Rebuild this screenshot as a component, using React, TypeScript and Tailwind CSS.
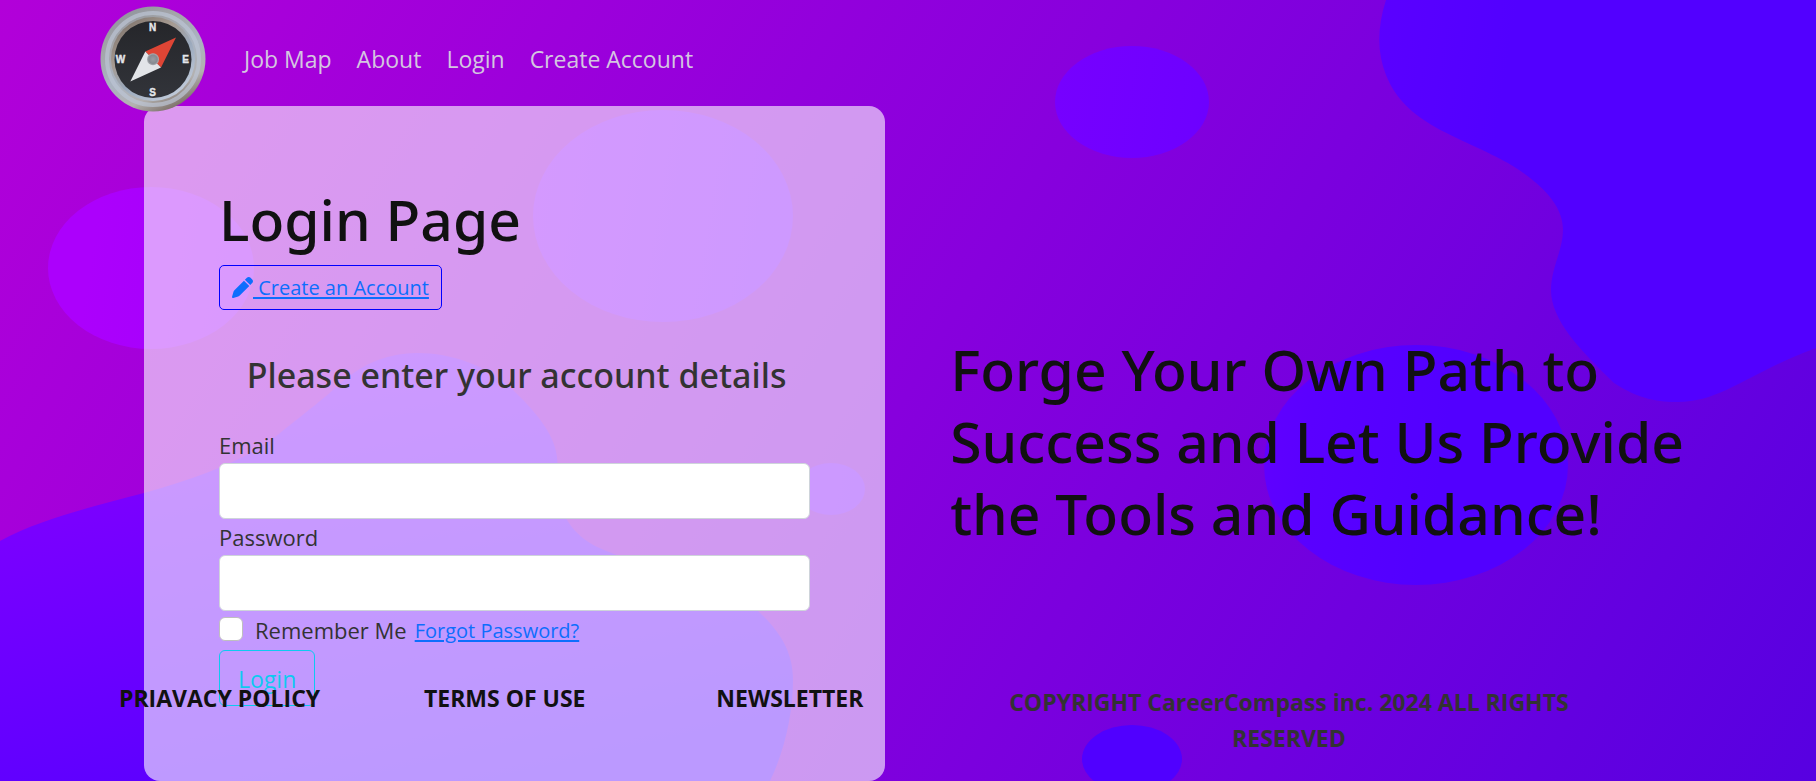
import { FaPen } from "react-icons/fa6";

function Backdrop() {
  return (
    <svg
      className="absolute inset-0 -z-10 h-full w-full"
      viewBox="0 0 1816 781"
      preserveAspectRatio="none"
      aria-hidden="true"
    >
      <defs>
        <linearGradient id="sky" gradientUnits="userSpaceOnUse" x1="0" y1="0" x2="1684" y2="1005">
          <stop offset="0" stopColor="#b200d9" />
          <stop offset="0.5" stopColor="#8700dd" />
          <stop offset="1" stopColor="#5700e1" />
        </linearGradient>
        <linearGradient id="blobs" gradientUnits="userSpaceOnUse" x1="100" y1="200" x2="1450" y2="420">
          <stop offset="0" stopColor="#ac00fc" />
          <stop offset="0.78" stopColor="#6e00ff" />
          <stop offset="0.9" stopColor="#5a00ff" />
          <stop offset="1" stopColor="#5200ff" />
        </linearGradient>
        <linearGradient id="wave" gradientUnits="userSpaceOnUse" x1="300" y1="360" x2="400" y2="800">
          <stop offset="0" stopColor="#8400ff" />
          <stop offset="1" stopColor="#5600ff" />
        </linearGradient>
      </defs>
      <rect width="1816" height="781" fill="url(#sky)" />
      <path
        fill="url(#blobs)"
        d="M1386 0C1377 28 1377 52 1386 75C1396 100 1413 114 1435 127C1460 141 1500 156 1522 172C1548 190 1563 209 1563 230C1563 250 1551 268 1551 290C1551 320 1580 350 1614 383C1640 400 1660 402 1678 402C1722 402 1750 372 1816 348V0Z"
      />
      <path
        fill="url(#wave)"
        d="M0 541C40 519 95 506 144 493C200 477 245 460 275 437C305 413 320 402 342 382C365 362 390 353 417 353C455 353 492 368 515 392C540 416 555 437 557 457C560 485 556 503 567 520C580 541 598 548 617 555C660 570 725 588 758 611C783 634 793 655 793 680C793 715 784 752 770 781H0Z"
      />
      <g fill="url(#blobs)">
        <ellipse cx="151" cy="268" rx="103" ry="81" />
        <ellipse cx="663" cy="216" rx="130" ry="106" />
        <ellipse cx="831" cy="489" rx="34" ry="26" />
        <ellipse cx="1132" cy="102" rx="77" ry="56" />
        <ellipse cx="1416" cy="465" rx="152" ry="120" />
        <ellipse cx="1132" cy="759" rx="50" ry="34" fill="#5000ff" />
      </g>
    </svg>
  );
}

function Compass() {
  return (
    <svg className="h-[106px] w-[106px]" viewBox="0 0 106 106" role="img" aria-label="CareerCompass">
      <defs>
        <linearGradient id="rim" x1="0.2" y1="0" x2="0.7" y2="1">
          <stop offset="0" stopColor="#8d929c" />
          <stop offset="0.25" stopColor="#a3a4a8" />
          <stop offset="0.55" stopColor="#aab3c2" />
          <stop offset="0.8" stopColor="#b3b1b0" />
          <stop offset="1" stopColor="#75675f" />
        </linearGradient>
        <linearGradient id="bezel" x1="0.1" y1="0" x2="0.8" y2="1">
          <stop offset="0" stopColor="#786d66" />
          <stop offset="0.35" stopColor="#a69b92" />
          <stop offset="0.6" stopColor="#9aa8bb" />
          <stop offset="1" stopColor="#c6d0df" />
        </linearGradient>
        <linearGradient id="face" x1="0" y1="0" x2="0" y2="1">
          <stop offset="0" stopColor="#25262a" />
          <stop offset="1" stopColor="#32343a" />
        </linearGradient>
        <radialGradient id="hub">
          <stop offset="0" stopColor="#9a9da3" />
          <stop offset="0.7" stopColor="#868a91" />
          <stop offset="1" stopColor="#aeb0b5" />
        </radialGradient>
      </defs>
      <circle cx="53" cy="53" r="52.500" fill="url(#rim)" />
      <circle cx="53" cy="53" r="46" fill="none" stroke="#bcc5d4" strokeWidth="4" opacity="0.7" />
      <circle cx="53" cy="53" r="42" fill="url(#bezel)" />
      <circle cx="53" cy="53.500" r="38.500" fill="url(#face)" />
      <g
        fill="#e4e6ea"
        stroke="#e4e6ea"
        strokeWidth="0.4"
        fontFamily="'Liberation Sans', sans-serif"
        fontWeight="700"
        fontSize="10"
        textAnchor="middle"
      >
        <text x="52.500" y="24.500">N</text>
        <text x="20.500" y="57">W</text>
        <text x="85.500" y="57">E</text>
        <text x="52.500" y="90">S</text>
      </g>
      <path d="M76 31.400L45.300 45.400L61 61.400Z" fill="#df4535" />
      <path d="M30.300 75.400L45.300 45.400L61 61.400Z" fill="#e2e4e8" />
      <circle cx="53" cy="53.300" r="6" fill="url(#hub)" />
    </svg>
  );
}

const navLinks = ["Job Map", "About", "Login", "Create Account"];
const footerLinks = ["PRIAVACY POLICY", "TERMS OF USE", "NEWSLETTER"];

function Field({ id, label, type }: { id: string; label: string; type: string }) {
  return (
    <div>
      <label htmlFor={id} className="block pt-px text-[22px] leading-[35px]">
        {label}
      </label>
      <input
        id={id}
        type={type}
        className="block h-14 w-full rounded-md border border-[#ced4da] bg-white px-3 text-[22px] outline-none"
      />
    </div>
  );
}

export default function App() {
  return (
    <div className="relative isolate min-h-screen overflow-hidden font-['Open_Sans','Noto_Sans',sans-serif] text-[#333]">
      <Backdrop />

      <header className="relative z-10 flex items-center gap-[38px] pt-[6px] pl-[100px]">
        <a href="#home">
          <Compass />
        </a>
        <nav className="flex gap-[25px] text-[23px] leading-9 text-[#d4c6e0]">
          {navLinks.map((name) => (
            <a key={name} href="#">
              {name}
            </a>
          ))}
        </nav>
      </header>

      <main className="-mt-[6px] flex items-center pr-[110px] pl-36">
        <section className="w-[47.45%] shrink-0 rounded-2xl bg-white/60 px-[75px] pt-[77px] pb-[75px]">
          <h1 className="font-['Noto_Sans','Open_Sans',sans-serif] text-[57px] leading-[72px] font-medium text-[#111]">
            Login Page
          </h1>
          <button
            type="button"
            className="mt-[10px] flex h-[45px] items-center rounded-[5px] border border-[#0000ff] px-3 text-[20px] text-[#0d6efd]"
          >
            <FaPen className="size-[21px]" />
            <span className="whitespace-pre underline decoration-2 underline-offset-2"> Create an Account</span>
          </button>
          <h2 className="mt-[43px] mb-[30px] pl-1 text-center font-['Noto_Sans','Open_Sans',sans-serif] text-[34px] leading-[44px] font-medium">
            Please enter your account details
          </h2>
          <form onSubmit={(e) => e.preventDefault()}>
            <Field id="email" label="Email" type="email" />
            <Field id="password" label="Password" type="password" />
            <div className="flex h-[39px] items-center">
              <input
                id="remember"
                type="checkbox"
                className="mb-[3px] size-6 appearance-none rounded-md border border-[#bfbfbf] bg-white checked:bg-[#0d6efd]"
              />
              <label htmlFor="remember" className="ml-3 pb-[2px] text-[22px] leading-9">
                Remember Me
              </label>
              <a
                href="#forgot"
                className="ml-2 text-[20px] leading-9 text-[#0d6efd] underline decoration-2 underline-offset-2"
              >
                Forgot Password?
              </a>
            </div>
            <button
              type="submit"
              className="block h-14 rounded-md border border-[#0dcaf0] px-[18px] pt-[2px] text-[23px] text-[#0dcaf0]"
            >
              Login
            </button>
          </form>
        </section>
        <h2 className="ml-[65px] pb-[6px] font-['Noto_Sans','Open_Sans',sans-serif] text-[57px] leading-[72px] font-medium text-[#111]">
          Forge Your Own Path to Success and Let Us Provide the Tools and Guidance!
        </h2>
      </main>

      <footer className="absolute inset-x-0 bottom-[25px] grid grid-cols-12 pr-7 pl-[77px] text-center text-[23px] leading-9 font-bold">
        {footerLinks.map((name) => (
          <a key={name} href="#" className="col-span-2 -mt-1 whitespace-nowrap text-[#111]">
            {name}
          </a>
        ))}
        <p className="col-span-5 px-6">COPYRIGHT CareerCompass inc. 2024 ALL RIGHTS RESERVED</p>
      </footer>
    </div>
  );
}
